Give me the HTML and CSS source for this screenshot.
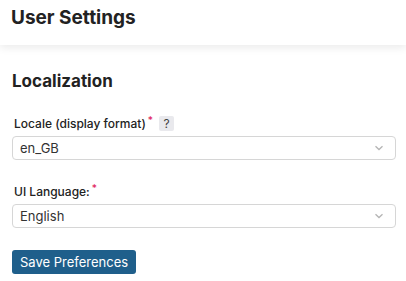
FILE: index.html
```html
<!DOCTYPE html>
<html lang="en">
<head>
    <meta charset="UTF-8">
    <title>User Settings</title>
    <link rel="stylesheet" href="styles.css">
</head>
<body>
    <div class="header">
        <h1>User Settings</h1>
    </div>
    <div class="content">
        <h2>Localization</h2>
        <form class="form">
            <div class="field">
                <label class="label">Locale (display format)<span class="req">*</span><span class="help">?</span></label>
                <div class="select">
                    <span>en_GB</span>
                    <svg width="10" height="6" viewBox="0 0 10 6"><path d="M1.5 1.2 L5 4.5 L8.5 1.2" fill="none" stroke="#b5b5b5" stroke-width="1.3"/></svg>
                </div>
            </div>
            <div class="field">
                <label class="label">UI Language:<span class="req">*</span></label>
                <div class="select">
                    <span>English</span>
                    <svg width="10" height="6" viewBox="0 0 10 6"><path d="M1.5 1.2 L5 4.5 L8.5 1.2" fill="none" stroke="#b5b5b5" stroke-width="1.3"/></svg>
                </div>
            </div>
            <button type="button" class="btn">Save Preferences</button>
        </form>
    </div>
</body>
</html>
```

FILE: styles.css
```css
body {
    margin: 0;
    background-color: #fff;
    color: #1f1f1f;
    font-family: 'Inter', sans-serif;
}
.header {
    height: 39px;
    padding: 6px 11px 0;
    box-shadow: 0 3px 8px rgba(0, 0, 0, 0.08);
}
.header h1 {
    margin: 0;
    font-size: 19px;
    font-weight: 700;
    color: #222;
}
.content {
    padding: 26px 10px 0 12px;
}
.content h2 {
    margin: 0 0 23px;
    font-size: 17px;
    font-weight: 700;
    color: #222;
}
.form {
    display: flex;
    flex-direction: column;
}
.field {
    margin-bottom: 22px;
}
.label {
    display: flex;
    align-items: center;
    height: 19px;
    padding-left: 2px;
    margin-bottom: 3px;
    font-size: 12px;
    font-weight: 500;
    color: #222;
}
.req {
    color: #e0245e;
    font-size: 10px;
    align-self: flex-start;
    margin-left: 2px;
}
.help {
    margin-left: 6px;
    width: 15px;
    height: 15px;
    background: #e9e9ed;
    border-radius: 2px;
    font-size: 12px;
    font-weight: 400;
    color: #444;
    display: flex;
    align-items: center;
    justify-content: center;
}
.select {
    height: 22px;
    border: 1px solid #d6d6d6;
    border-radius: 4px;
    display: flex;
    align-items: center;
    justify-content: space-between;
    padding: 0 11px 0 7px;
    font-size: 13px;
    color: #333;
}
.btn {
    align-self: flex-start;
    height: 24px;
    padding: 0 8px;
    border: none;
    border-radius: 3px;
    background-color: #1f5f8b;
    color: #fff;
    font-family: 'Inter', sans-serif;
    font-size: 13px;
}
```
